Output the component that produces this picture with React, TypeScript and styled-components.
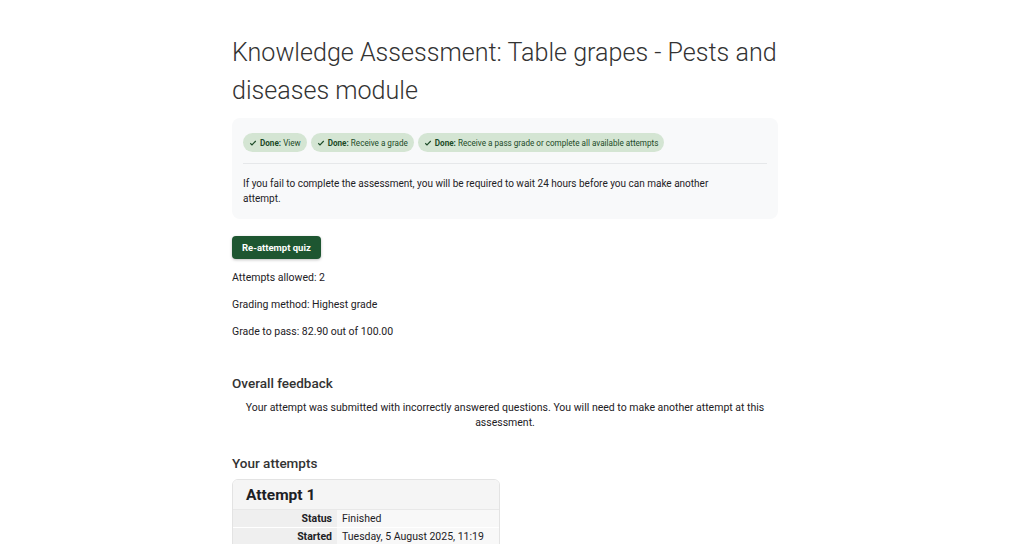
import styled, { createGlobalStyle } from "styled-components";

const GlobalStyle = createGlobalStyle`
  html, body {
    margin: 0;
    padding: 0;
    background: #fff;
  }
  body {
    font-family: Roboto, "Liberation Sans", sans-serif;
    color: #1d2125;
    font-size: 10.5px;
  }
`;

const Page = styled.main`
  width: 546px;
  margin-left: 232px;
  padding-top: 34px;
`;

const Title = styled.h1`
  margin: 0 0 8px;
  font-size: 25.1px;
  font-weight: 300;
  line-height: 38px;
  color: #333;
`;

const InfoBox = styled.section`
  background: #f8f9fa;
  border-radius: 8px;
  padding: 15px 11px 13px;
`;

const Badges = styled.div`
  display: flex;
  gap: 4px;
  padding-bottom: 11px;
  border-bottom: 1px solid #e6e8ea;
`;

const Badge = styled.span`
  display: inline-flex;
  align-items: center;
  gap: 3px;
  height: 19px;
  padding: 0 6px;
  border-radius: 10px;
  background: #d4e5d3;
  color: #1c4a27;
  font-size: 8.15px;
  b {
    font-weight: 700;
  }
`;

const Notice = styled.p`
  margin: 12px 0 0;
  max-width: 480px;
  font-size: 10px;
  line-height: 15px;
`;

const Button = styled.button`
  display: block;
  margin-top: 17px;
  height: 23px;
  padding: 0 10px;
  border: none;
  border-radius: 4px;
  background: #1e5631;
  color: #fff;
  font-family: inherit;
  font-size: 9.5px;
  font-weight: 700;
  box-shadow: 0 1px 3px rgba(0, 0, 0, 0.25);
`;

const Meta = styled.p`
  margin: 11px 0 0;
  line-height: 16px;
  & + & {
    margin-top: 11px;
  }
`;

const SectionTitle = styled.h3<{ $top: number }>`
  margin: ${(p) => p.$top}px 0 0;
  font-size: 13.5px;
  font-weight: 500;
  line-height: 20px;
  color: #333;
`;

const Feedback = styled.p`
  margin: 7px 0 0;
  text-align: center;
  line-height: 15px;
`;

const AttemptCard = styled.div`
  width: 266px;
  margin-top: 6px;
  border: 1px solid #e3e3e3;
  border-radius: 6px 6px 0 0;
  overflow: hidden;
`;

const CardHeader = styled.div`
  background: #f5f5f5;
  padding: 4px 13px 3px;
  font-size: 15.5px;
  font-weight: 700;
  line-height: 22px;
  border-bottom: 1px solid #e8e8e8;
`;

const Row = styled.div`
  display: grid;
  grid-template-columns: 104px 1fr;
  border-bottom: 1px solid #fff;
  line-height: 17px;
`;

const Label = styled.div`
  background: #efefef;
  text-align: right;
  font-weight: 700;
  padding-right: 5px;
`;

const Value = styled.div`
  background: #f8f8f8;
  padding-left: 5px;
`;

const Check = () => (
  <svg width="8" height="8" viewBox="0 0 16 16" fill="none" stroke="currentColor" strokeWidth="2.2">
    <path d="M2.5 8.5l3.5 3.5 7.5-8" />
  </svg>
);

const badges = [
  "View",
  "Receive a grade",
  "Receive a pass grade or complete all available attempts",
];

const rows = [
  ["Status", "Finished"],
  ["Started", "Tuesday, 5 August 2025, 11:19"],
];

export default function App() {
  return (
    <>
      <GlobalStyle />
      <Page>
        <Title>Knowledge Assessment: Table grapes - Pests and diseases module</Title>
        <InfoBox>
          <Badges>
            {badges.map((b) => (
              <Badge key={b}>
                <Check />
                <span>
                  <b>Done:</b> {b}
                </span>
              </Badge>
            ))}
          </Badges>
          <Notice>
            If you fail to complete the assessment, you will be required to wait 24 hours before you can make another
            attempt.
          </Notice>
        </InfoBox>
        <Button>Re-attempt quiz</Button>
        <Meta>Attempts allowed: 2</Meta>
        <Meta>Grading method: Highest grade</Meta>
        <Meta>Grade to pass: 82.90 out of 100.00</Meta>
        <SectionTitle $top={33}>Overall feedback</SectionTitle>
        <Feedback>
          Your attempt was submitted with incorrectly answered questions. You will need to make another attempt at this
          assessment.
        </Feedback>
        <SectionTitle $top={23}>Your attempts</SectionTitle>
        <AttemptCard>
          <CardHeader>Attempt 1</CardHeader>
          {rows.map(([l, v]) => (
            <Row key={l}>
              <Label>{l}</Label>
              <Value>{v}</Value>
            </Row>
          ))}
        </AttemptCard>
      </Page>
    </>
  );
}
